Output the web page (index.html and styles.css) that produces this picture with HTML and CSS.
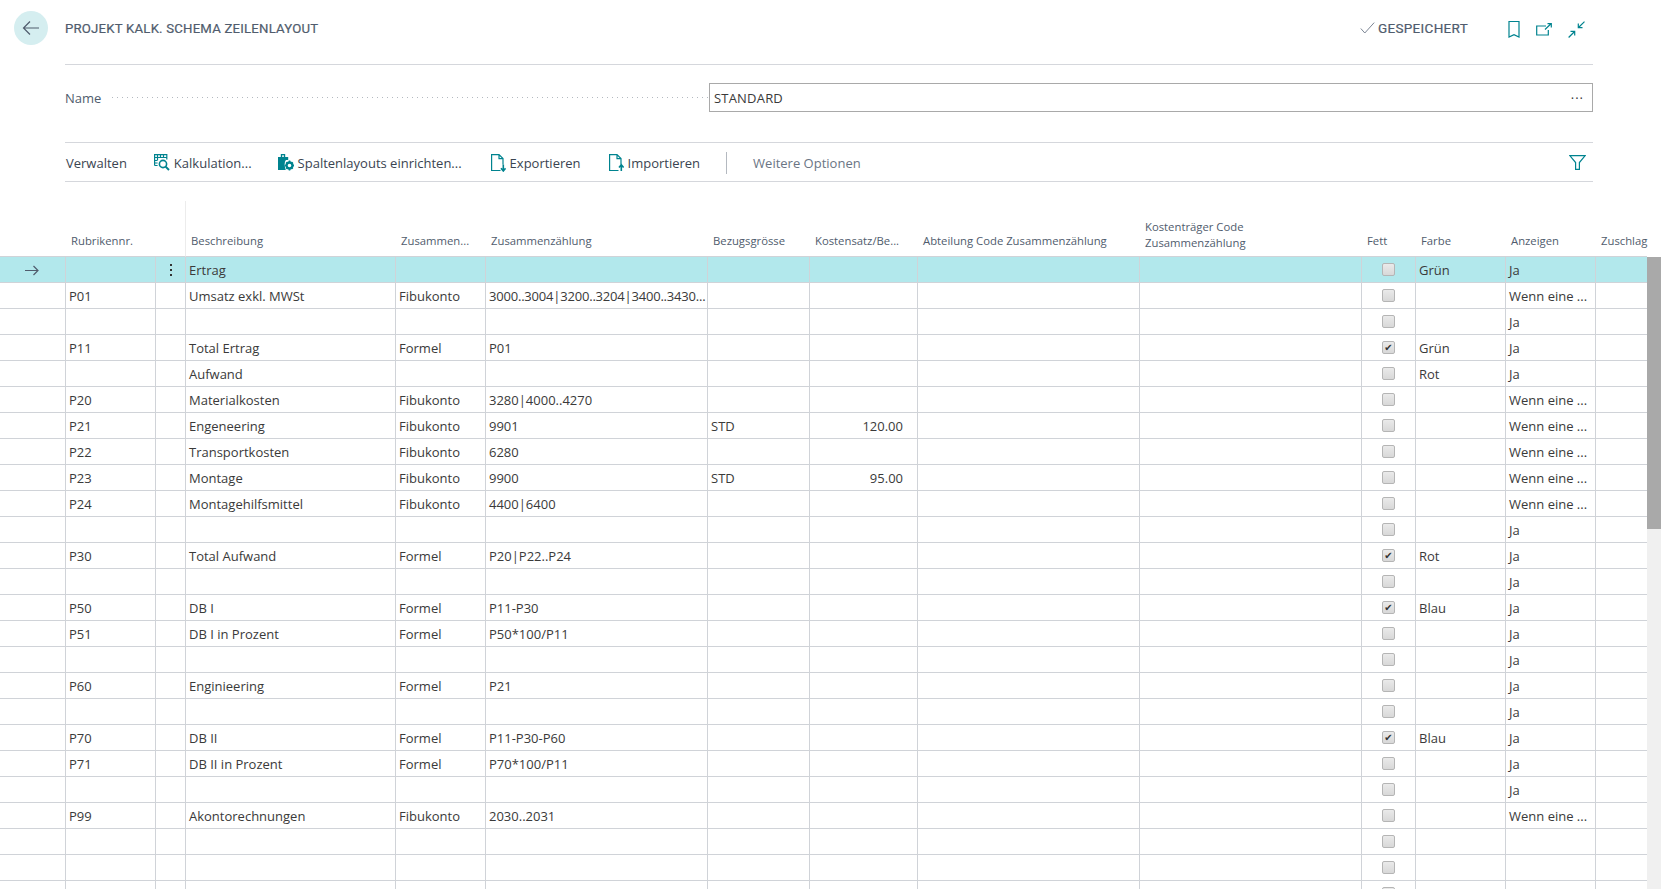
FILE: index.html
```html
<!DOCTYPE html>
<html lang="de">
<head>
<meta charset="utf-8">
<title>Projekt Kalk. Schema Zeilenlayout</title>
<link rel="stylesheet" href="styles.css">
</head>
<body>
<header class="head">
  <div class="back-col">
    <button class="back" aria-label="Zurück">
      <svg width="18" height="16" viewBox="0 0 18 16" class="ic-dark"><path d="M17 8H1.5M8 1.5 1.5 8 8 14.5"/></svg>
    </button>
  </div>
  <div class="head-main">
    <h1 class="title">Projekt Kalk. Schema Zeilenlayout</h1>
    <div class="status">
      <svg width="15" height="12" viewBox="0 0 15 12" class="ic-grey"><path d="M.8 6.5 4.8 11 14.2.6"/></svg>
      <span>Gespeichert</span>
    </div>
    <div class="head-icons">
      <svg width="12" height="17" viewBox="0 0 12 17" class="ic"><path d="M1 .5h10v15.5l-5-2.4L1 16z"/></svg>
      <svg width="16" height="13" viewBox="0 0 16 13" class="ic"><path d="M10 3H.7v9h11.6V7M9 6.5 15 .8M11.5.6h3.8v3.8"/></svg>
      <svg width="17" height="17" viewBox="0 0 17 17" class="ic"><path d="M16.5.6 10.5 6.5M10.3 2.5v4.2h4.2M.6 16.5l6-6M2.5 10.4h4.2v4.2"/></svg>
    </div>
  </div>
</header>

<section class="name-row">
  <label class="name-label">Name</label>
  <span class="dots"></span>
  <div class="field"><span class="field-text">STANDARD</span><span class="more">···</span></div>
</section>

<nav class="actions">
  <span class="act act-first">Verwalten</span>
  <span class="act">
    <svg width="16" height="17" viewBox="0 0 16 17" class="ic"><path d="M.6 11.5V.6h12.2v5M.6 3.5h12.2M3.5 1v5M6.5 1v2.5M9.5 1v2.5M.6 6.5h3M.6 9h3M.6 11.5h3"/><circle cx="9" cy="10" r="3.6" stroke-width="1.6"/><path d="m11.6 12.6 3.4 3.4" stroke-width="2"/></svg>
    Kalkulation...
  </span>
  <span class="act act-wide">
    <svg width="16" height="17" viewBox="0 0 16 17" class="ic"><path d="M.6 3.5h9v2H7.5c-1 1-1.500 3-1.500 5 0 1.500.5 3 1 5H.6z" fill="#00838f"/><path d="M3.500 3V.6h3V3" stroke-width="1.400"/><circle cx="11.500" cy="11.500" r="3" stroke-width="2.400"/><path d="M11.500 6.500v1.500M11.500 15v1.500M6.700 11.500h1.500M14.800 11.500h1.200M8.300 8.300l1 1M13.700 13.700l1 1M8.300 14.700l1-1M13.700 9.300l1-1" stroke-width="1.600"/></svg>
    Spaltenlayouts einrichten...
  </span>
  <span class="act act-exp">
    <svg width="15" height="18" viewBox="0 0 15 18" class="ic"><path d="M9.500 16.500H.6V.6h7.400l4 4v6M8 .6v4h4"/><path d="M12.300 10.500v6M10 14.300l2.300 2.700 2.300-2.700" stroke-width="1.600"/></svg>
    Exportieren
  </span>
  <span class="act">
    <svg width="15" height="18" viewBox="0 0 15 18" class="ic"><path d="M9.500 16.500H.6V.6h7.400l4 4v6M8 .6v4h4"/><path d="M12.300 17v-6M10 13.500l2.300-2.700 2.300 2.700" stroke-width="1.600"/></svg>
    Importieren
  </span>
  <span class="sep"></span>
  <span class="act act-more">Weitere Optionen</span>
  <svg width="17" height="15" viewBox="0 0 17 15" class="ic filter"><path d="M.8.6h15.400L10.400 7.500v6.900H6.600V7.500z"/></svg>
</nav>

<div class="grid-wrap">
  <table class="grid">
    <colgroup>
      <col class="c-arrow"><col class="c-no"><col class="c-menu"><col class="c-desc"><col class="c-type"><col class="c-sum">
      <col class="c-ref"><col class="c-rate"><col class="c-dept"><col class="c-cost"><col class="c-bold"><col class="c-color"><col class="c-show"><col class="c-add">
    </colgroup>
    <thead>
      <tr>
        <th></th><th>Rubrikennr.</th><th class="grip"></th><th>Beschreibung</th><th>Zusammen...</th><th>Zusammenzählung</th>
        <th>Bezugsgrösse</th><th>Kostensatz/Be...</th><th>Abteilung Code Zusammenzählung</th><th class="wrap">Kostenträger Code Zusammenzählung</th>
        <th>Fett</th><th>Farbe</th><th>Anzeigen</th><th>Zuschlag</th>
      </tr>
    </thead>
    <tbody>
      <tr class="active">
        <td class="arrow"><svg width="14" height="11" viewBox="0 0 14 11" class="ic-dark"><path d="M0 5.500h13M8.500 1 13 5.500 8.500 10"/></svg></td>
        <td></td><td class="menu"><span class="kebab"></span></td><td>Ertrag</td><td></td><td></td><td></td><td></td><td></td><td></td>
        <td class="chk"><span class="box"></span></td><td>Grün</td><td>Ja</td><td></td>
      </tr>
      <tr><td></td><td>P01</td><td></td><td>Umsatz exkl. MWSt</td><td>Fibukonto</td><td class="long">3000..3004|3200..3204|3400..3430...</td><td></td><td></td><td></td><td></td><td class="chk"><span class="box"></span></td><td></td><td>Wenn eine ...</td><td></td></tr>
      <tr><td></td><td></td><td></td><td></td><td></td><td></td><td></td><td></td><td></td><td></td><td class="chk"><span class="box"></span></td><td></td><td>Ja</td><td></td></tr>
      <tr><td></td><td>P11</td><td></td><td>Total Ertrag</td><td>Formel</td><td>P01</td><td></td><td></td><td></td><td></td><td class="chk"><span class="box on"></span></td><td>Grün</td><td>Ja</td><td></td></tr>
      <tr><td></td><td></td><td></td><td>Aufwand</td><td></td><td></td><td></td><td></td><td></td><td></td><td class="chk"><span class="box"></span></td><td>Rot</td><td>Ja</td><td></td></tr>
      <tr><td></td><td>P20</td><td></td><td>Materialkosten</td><td>Fibukonto</td><td>3280|4000..4270</td><td></td><td></td><td></td><td></td><td class="chk"><span class="box"></span></td><td></td><td>Wenn eine ...</td><td></td></tr>
      <tr><td></td><td>P21</td><td></td><td>Engeneering</td><td>Fibukonto</td><td>9901</td><td>STD</td><td class="num">120.00</td><td></td><td></td><td class="chk"><span class="box"></span></td><td></td><td>Wenn eine ...</td><td></td></tr>
      <tr><td></td><td>P22</td><td></td><td>Transportkosten</td><td>Fibukonto</td><td>6280</td><td></td><td></td><td></td><td></td><td class="chk"><span class="box"></span></td><td></td><td>Wenn eine ...</td><td></td></tr>
      <tr><td></td><td>P23</td><td></td><td>Montage</td><td>Fibukonto</td><td>9900</td><td>STD</td><td class="num">95.00</td><td></td><td></td><td class="chk"><span class="box"></span></td><td></td><td>Wenn eine ...</td><td></td></tr>
      <tr><td></td><td>P24</td><td></td><td>Montagehilfsmittel</td><td>Fibukonto</td><td>4400|6400</td><td></td><td></td><td></td><td></td><td class="chk"><span class="box"></span></td><td></td><td>Wenn eine ...</td><td></td></tr>
      <tr><td></td><td></td><td></td><td></td><td></td><td></td><td></td><td></td><td></td><td></td><td class="chk"><span class="box"></span></td><td></td><td>Ja</td><td></td></tr>
      <tr><td></td><td>P30</td><td></td><td>Total Aufwand</td><td>Formel</td><td>P20|P22..P24</td><td></td><td></td><td></td><td></td><td class="chk"><span class="box on"></span></td><td>Rot</td><td>Ja</td><td></td></tr>
      <tr><td></td><td></td><td></td><td></td><td></td><td></td><td></td><td></td><td></td><td></td><td class="chk"><span class="box"></span></td><td></td><td>Ja</td><td></td></tr>
      <tr><td></td><td>P50</td><td></td><td>DB I</td><td>Formel</td><td>P11-P30</td><td></td><td></td><td></td><td></td><td class="chk"><span class="box on"></span></td><td>Blau</td><td>Ja</td><td></td></tr>
      <tr><td></td><td>P51</td><td></td><td>DB I in Prozent</td><td>Formel</td><td>P50*100/P11</td><td></td><td></td><td></td><td></td><td class="chk"><span class="box"></span></td><td></td><td>Ja</td><td></td></tr>
      <tr><td></td><td></td><td></td><td></td><td></td><td></td><td></td><td></td><td></td><td></td><td class="chk"><span class="box"></span></td><td></td><td>Ja</td><td></td></tr>
      <tr><td></td><td>P60</td><td></td><td>Enginieering</td><td>Formel</td><td>P21</td><td></td><td></td><td></td><td></td><td class="chk"><span class="box"></span></td><td></td><td>Ja</td><td></td></tr>
      <tr><td></td><td></td><td></td><td></td><td></td><td></td><td></td><td></td><td></td><td></td><td class="chk"><span class="box"></span></td><td></td><td>Ja</td><td></td></tr>
      <tr><td></td><td>P70</td><td></td><td>DB II</td><td>Formel</td><td>P11-P30-P60</td><td></td><td></td><td></td><td></td><td class="chk"><span class="box on"></span></td><td>Blau</td><td>Ja</td><td></td></tr>
      <tr><td></td><td>P71</td><td></td><td>DB II in Prozent</td><td>Formel</td><td>P70*100/P11</td><td></td><td></td><td></td><td></td><td class="chk"><span class="box"></span></td><td></td><td>Ja</td><td></td></tr>
      <tr><td></td><td></td><td></td><td></td><td></td><td></td><td></td><td></td><td></td><td></td><td class="chk"><span class="box"></span></td><td></td><td>Ja</td><td></td></tr>
      <tr><td></td><td>P99</td><td></td><td>Akontorechnungen</td><td>Fibukonto</td><td>2030..2031</td><td></td><td></td><td></td><td></td><td class="chk"><span class="box"></span></td><td></td><td>Wenn eine ...</td><td></td></tr>
      <tr><td></td><td></td><td></td><td></td><td></td><td></td><td></td><td></td><td></td><td></td><td class="chk"><span class="box"></span></td><td></td><td></td><td></td></tr>
      <tr><td></td><td></td><td></td><td></td><td></td><td></td><td></td><td></td><td></td><td></td><td class="chk"><span class="box"></span></td><td></td><td></td><td></td></tr>
      <tr><td></td><td></td><td></td><td></td><td></td><td></td><td></td><td></td><td></td><td></td><td class="chk"><span class="box"></span></td><td></td><td></td><td></td></tr>
    </tbody>
  </table>
  <div class="scrollbar"><div class="thumb"></div></div>
</div>
</body>
</html>
```

FILE: styles.css
```css
* { box-sizing: border-box; }
html, body { height: 100%; overflow: hidden; }
body {
  margin: 0;
  background: #fff;
  color: #3a3a3a;
  font-family: "Open Sans", "Liberation Sans", sans-serif;
  font-size: 13px;
}
svg { display: block; fill: none; stroke-width: 1.2; flex: none; }
.ic { stroke: #00838f; }
.ic-dark { stroke: #505c6d; }
.ic-grey { stroke: #7b8594; stroke-width: 1; }

/* header */
.head { display: flex; height: 65px; }
.back-col { width: 65px; padding: 11px 0 0 14px; flex: none; }
.back {
  width: 34px; height: 34px; padding: 0; border: 0; border-radius: 50%;
  background: #d5eef0;
  display: flex; align-items: center; justify-content: center;
}
.head-main {
  flex: 1; margin-right: 68px; display: flex; align-items: center;
  border-bottom: 1px solid #d5d7dc; padding-bottom: 8px;
}
.title {
  margin: 0; flex: 1;
  font: 400 13.200px Roboto, "Liberation Sans", sans-serif;
  text-transform: uppercase; letter-spacing: .2px; color: #505c6d;
  -webkit-text-stroke: .2px #505c6d;
}
.status {
  display: flex; align-items: center; gap: 3px;
  font: 400 13.500px Roboto, "Liberation Sans", sans-serif;
  text-transform: uppercase; letter-spacing: .3px; color: #505c6d;
  -webkit-text-stroke: .2px #505c6d;
}
.head-icons { display: flex; align-items: center; gap: 16px; margin: 2px 8px 0 40px; }

/* name field */
.name-row {
  display: flex; align-items: center; height: 78px; margin: 0 68px 0 65px;
  padding-bottom: 13px; border-bottom: 1px solid #d5d7dc;
}
.name-label { color: #505c6d; width: 47px; flex: none; padding-top: 2px; }
.dots {
  width: 597px; flex: none; height: 1px; margin-top: 1px;
  background: repeating-linear-gradient(to right, #b4b9c0 0 1px, transparent 1px 5px);
}
.field {
  flex: 1; height: 29px; border: 1px solid #a9a9a9; padding: 1px 8px 0 4px;
  display: flex; align-items: center; justify-content: space-between;
  color: #3a3a3a;
}
.field-text { letter-spacing: .2px; }
.more { letter-spacing: 1px; }

/* action bar */
.actions {
  display: flex; align-items: center; height: 39px; margin: 0 68px 0 65px;
  border-bottom: 1px solid #d5d7dc; padding: 1px 7px 0 1px;
}
.act { display: flex; align-items: center; gap: 4px; margin-right: 26px; white-space: nowrap; color: #3a4451; }
.act-first { margin-right: 27px; }
.act-wide { margin-right: 29px; }
.act-exp { margin-right: 28px; }
.sep { width: 1px; height: 22px; background: #b4b9c0; margin-right: 26px; }
.act-more { color: #6a7584; }
.filter { margin-left: auto; }

/* grid */
.grid-wrap { display: flex; align-items: flex-start; margin-top: 19px; }
.grid {
  width: 1647px; flex: none; table-layout: fixed;
  border-collapse: separate; border-spacing: 0;
}
.c-arrow { width: 66px; } .c-no { width: 90px; } .c-menu { width: 30px; } .c-desc { width: 210px; }
.c-type { width: 90px; } .c-sum { width: 222px; } .c-ref { width: 102px; } .c-rate { width: 108px; }
.c-dept { width: 222px; } .c-cost { width: 222px; } .c-bold { width: 54px; } .c-color { width: 90px; }
.c-show { width: 90px; } .c-add { width: 51px; }

th {
  height: 56px; padding: 0 0 7px 5px; vertical-align: bottom; text-align: left;
  font-weight: 400; font-size: 11.300px; line-height: 16px; color: #505c6d;
  white-space: nowrap; border-bottom: 1px solid #d0d3d8;
}
th.wrap { white-space: normal; padding: 0 40px 5px 5px; }
th.grip { border-right: 1px solid #ececec; }
td {
  height: 26px; padding: 2px 3px 0; white-space: nowrap; overflow: hidden;
  border-right: 1px solid #d0d3d8; border-bottom: 1px solid #d0d3d8;
  line-height: 23px;
}
td:last-child { border-right: 0; }
.long { letter-spacing: -.2px; }
.num { text-align: right; padding-right: 14px; }
.chk { padding: 0; text-align: center; }
.active td { background: #b2e8ec; }
.arrow svg { margin-left: 22px; }
.menu { padding: 0; }
.kebab { display: block; width: 2px; height: 2px; margin: 0 auto; background: #333; box-shadow: 0 -5px #333, 0 5px #333; }
.box {
  display: inline-block; width: 13px; height: 13px; vertical-align: middle;
  margin: 0 0 2px; border: 1px solid #b5b5b5; border-radius: 2px;
  background: linear-gradient(#eaeaea, #d8d8d8);
  position: relative;
}
.box.on::after {
  content: "✔"; position: absolute; left: 0; top: 0; width: 11px; height: 11px;
  font: 10px/11px "DejaVu Sans", sans-serif; color: #333; text-align: center;
}

.scrollbar { width: 14px; height: 650px; background: #f0f0f0; flex: none; margin-top: 56px; }
.thumb { height: 272px; background: #a9a9a9; }
```
